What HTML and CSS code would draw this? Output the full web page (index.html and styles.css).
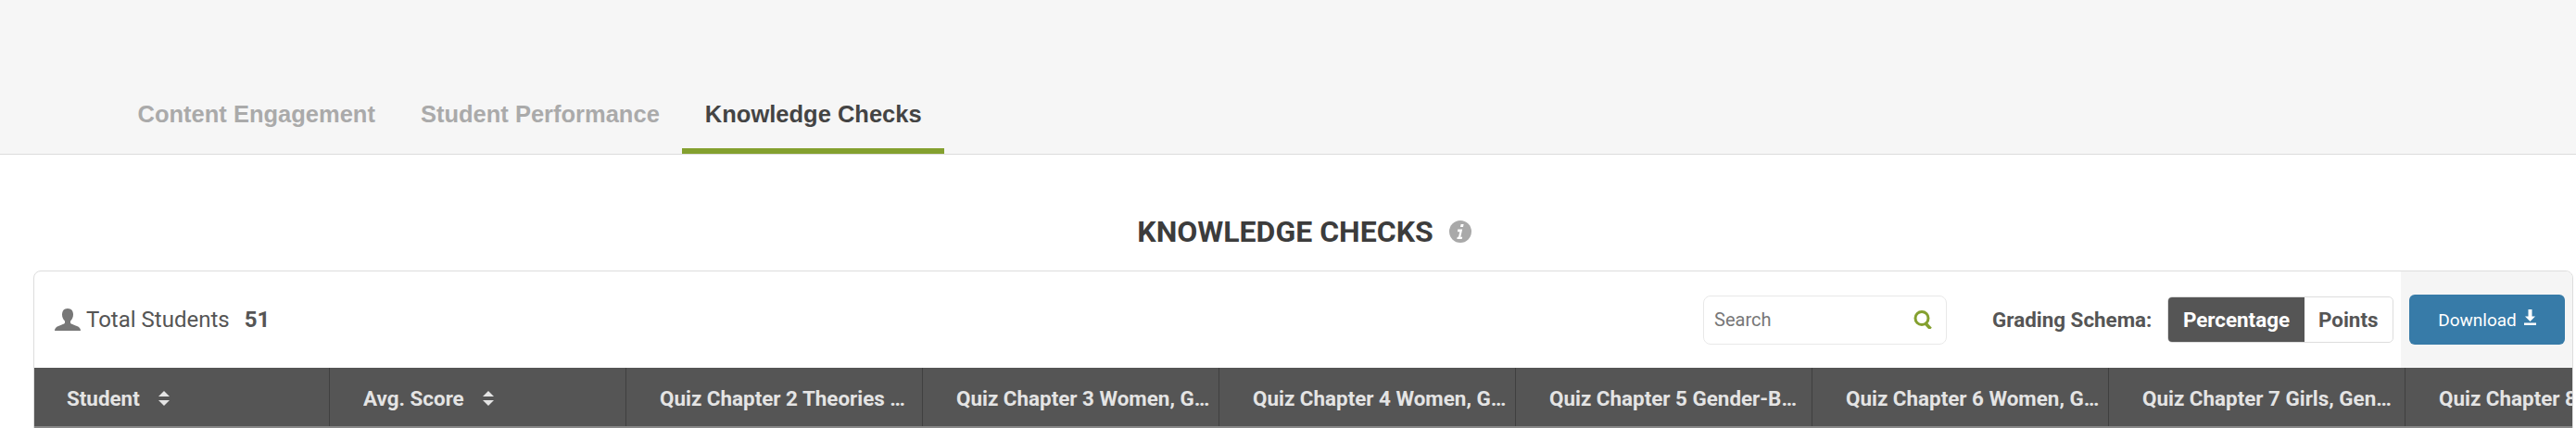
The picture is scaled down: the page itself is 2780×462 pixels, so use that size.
FILE: index.html
```html
<!DOCTYPE html>
<html lang="en">
<head>
    <meta charset="UTF-8">
    <title>Knowledge Checks</title>
    <link rel="stylesheet" href="styles.css">
</head>
<body>
    <div class="topbar">
        <div class="tabs">
            <a class="tab">Content Engagement</a>
            <a class="tab">Student Performance</a>
            <a class="tab active">Knowledge Checks</a>
        </div>
    </div>
    <div class="heading">
        <h1>KNOWLEDGE CHECKS</h1>
        <svg class="info" viewBox="0 0 24 24" width="24" height="24">
            <circle cx="12" cy="12" r="12" fill="#a9a9a9"/>
            <path d="M12.6 3.9h3l-.6 3h-3zM9.2 9.6h5l-1.9 8.2h1.9l-.5 2.3H8.6c-.2 0-.3-.1-.3-.3l.4-1.8c0-.1.1-.2.3-.2h1l1.3-5.6H9l.2-2.6z" fill="#fff"/>
        </svg>
    </div>
    <div class="card">
        <div class="toolbar">
            <div class="total">
                <svg class="user" viewBox="0 0 28 24" width="28" height="24">
                    <path d="M14 0c4 0 6 2.800 6 6.500 0 3-1.300 5.500-3 7v2c0 1 3.500 2 7 3.500 2.500 1 4 2.500 4 5H0c0-2.500 1.500-4 4-5 3.500-1.500 7-2.500 7-3.500v-2c-1.700-1.500-3-4-3-7C8 2.800 10 0 14 0z" fill="#777"/>
                </svg>
                <span class="total-label">Total Students</span>
                <b>51</b>
            </div>
            <div class="search">
                <span class="search-text">Search</span>
                <svg viewBox="0 0 21 20" width="21" height="20">
                    <circle cx="9" cy="8.500" r="7" fill="none" stroke="#84a02f" stroke-width="3"/>
                    <path d="M13 14l5.500 6" stroke="#84a02f" stroke-width="3.500" fill="none"/>
                </svg>
            </div>
            <span class="schema-label">Grading Schema:</span>
            <div class="toggle">
                <span class="toggle-item on">Percentage</span>
                <span class="toggle-item">Points</span>
            </div>
            <div class="download-panel">
                <button class="download">Download
                    <svg class="download-icon" viewBox="0 0 13 17" width="13" height="17">
                        <path d="M4.500 0h4v7.500H12L6.500 13 1 7.500h3.500zM0 14.500h13V17H0z" fill="#fff"/>
                    </svg>
                </button>
            </div>
        </div>
        <div class="table-head">
            <div class="col"><span class="col-name">Student</span><span class="sort"></span></div>
            <div class="col"><span class="col-name">Avg. Score</span><span class="sort"></span></div>
            <div class="col"><span class="col-name">Quiz Chapter 2 Theories of Gender</span></div>
            <div class="col"><span class="col-name">Quiz Chapter 3 Women, Gender and Work</span></div>
            <div class="col"><span class="col-name">Quiz Chapter 4 Women, Gender and Family</span></div>
            <div class="col"><span class="col-name">Quiz Chapter 5 Gender-Based Violence</span></div>
            <div class="col"><span class="col-name">Quiz Chapter 6 Women, Gender and Health</span></div>
            <div class="col"><span class="col-name">Quiz Chapter 7 Girls, Gender and School</span></div>
            <div class="col"><span class="col-name">Quiz Chapter 8 Women and Politics</span></div>
        </div>
    </div>
</body>
</html>
```

FILE: styles.css
```css
body {
    margin: 0;
    height: 462px;
    overflow: hidden;
    background: #fff;
    font-family: Roboto, sans-serif;
    color: #3c3c3c;
}
.topbar {
    height: 166px;
    background: #f6f6f6;
    border-bottom: 1px solid #ddd;
    display: flex;
    align-items: flex-end;
    padding-left: 124px;
}
.tabs {
    display: flex;
}
.tab {
    font-family: "Liberation Sans", Arial, sans-serif;
    font-weight: bold;
    font-size: 25.500px;
    color: #aaa;
    padding: 0 24.500px;
    height: 80px;
    line-height: 74px;
    box-sizing: border-box;
}
.tab.active {
    color: #444;
    border-bottom: 6px solid #84a02f;
}
.heading {
    display: flex;
    justify-content: center;
    align-items: center;
    gap: 17px;
    height: 85px;
    padding: 40px 0 0 35px;
}
.heading h1 {
    margin: 0;
    font-size: 32px;
    font-weight: 700;
    color: #3c3c3c;
}
.card {
    margin-left: 36px;
    margin-right: 3px;
    border: 1px solid #ddd;
    border-radius: 8px 8px 0 0;
    overflow: hidden;
}
.toolbar {
    height: 104px;
    display: flex;
    align-items: center;
    padding-left: 22px;
}
.total {
    display: flex;
    align-items: center;
    font-size: 24px;
    color: #555;
    flex: 1;
}
.total-label {
    margin-left: 6px;
}
.total b {
    margin-left: 16px;
}
.search {
    width: 263px;
    height: 53px;
    box-sizing: border-box;
    border: 1px solid #e8e8e8;
    border-radius: 8px;
    display: flex;
    align-items: center;
    justify-content: space-between;
    padding: 0 14px 0 11px;
    margin-right: 49px;
}
.search-text {
    font-size: 20px;
    color: #777;
}
.schema-label {
    font-size: 22.400px;
    font-weight: 700;
    color: #555;
    margin-right: 17px;
}
.toggle {
    display: flex;
    height: 50px;
    border: 1px solid #ddd;
    border-radius: 5px;
    overflow: hidden;
    box-sizing: border-box;
    font-size: 22.400px;
    font-weight: 700;
    color: #555;
    margin-right: 8px;
}
.toggle-item {
    padding: 0 15.500px;
    line-height: 48px;
}
.toggle-item.on {
    background: #555;
    color: #fff;
}
.download-panel {
    width: 185px;
    height: 100%;
    background: #f5f5f5;
    display: flex;
    align-items: center;
    padding-left: 9px;
    box-sizing: border-box;
}
.download {
    width: 168px;
    height: 54px;
    border: 0;
    border-radius: 6px;
    background: #377ba8;
    color: #fff;
    font-family: Roboto, sans-serif;
    font-size: 19px;
    display: flex;
    align-items: center;
    justify-content: center;
    gap: 8px;
}
.download-icon {
    margin-top: -6px;
}
.table-head {
    display: flex;
    height: 63px;
    background: #555;
    border-bottom: 2px solid #888;
}
.col {
    flex: 0 0 320px;
    min-width: 0;
    box-sizing: border-box;
    border-right: 1px solid #404040;
    padding: 3px 8px 0 36px;
    display: flex;
    align-items: center;
    font-size: 22.400px;
    font-weight: 700;
    color: #e4e4e4;
}
.col:first-child {
    flex-basis: 319px;
    padding-left: 35px;
}
.col-name {
    min-width: 0;
    overflow: hidden;
    white-space: nowrap;
    text-overflow: ellipsis;
}
.sort {
    margin-left: 20px;
    width: 13px;
    height: 16px;
    position: relative;
}
.sort::before,
.sort::after {
    content: "";
    position: absolute;
    left: 0;
    border-left: 6.500px solid transparent;
    border-right: 6.500px solid transparent;
}
.sort::before {
    top: 0;
    border-bottom: 6.500px solid #e4e4e4;
}
.sort::after {
    bottom: 0;
    border-top: 6.500px solid #e4e4e4;
}
```
